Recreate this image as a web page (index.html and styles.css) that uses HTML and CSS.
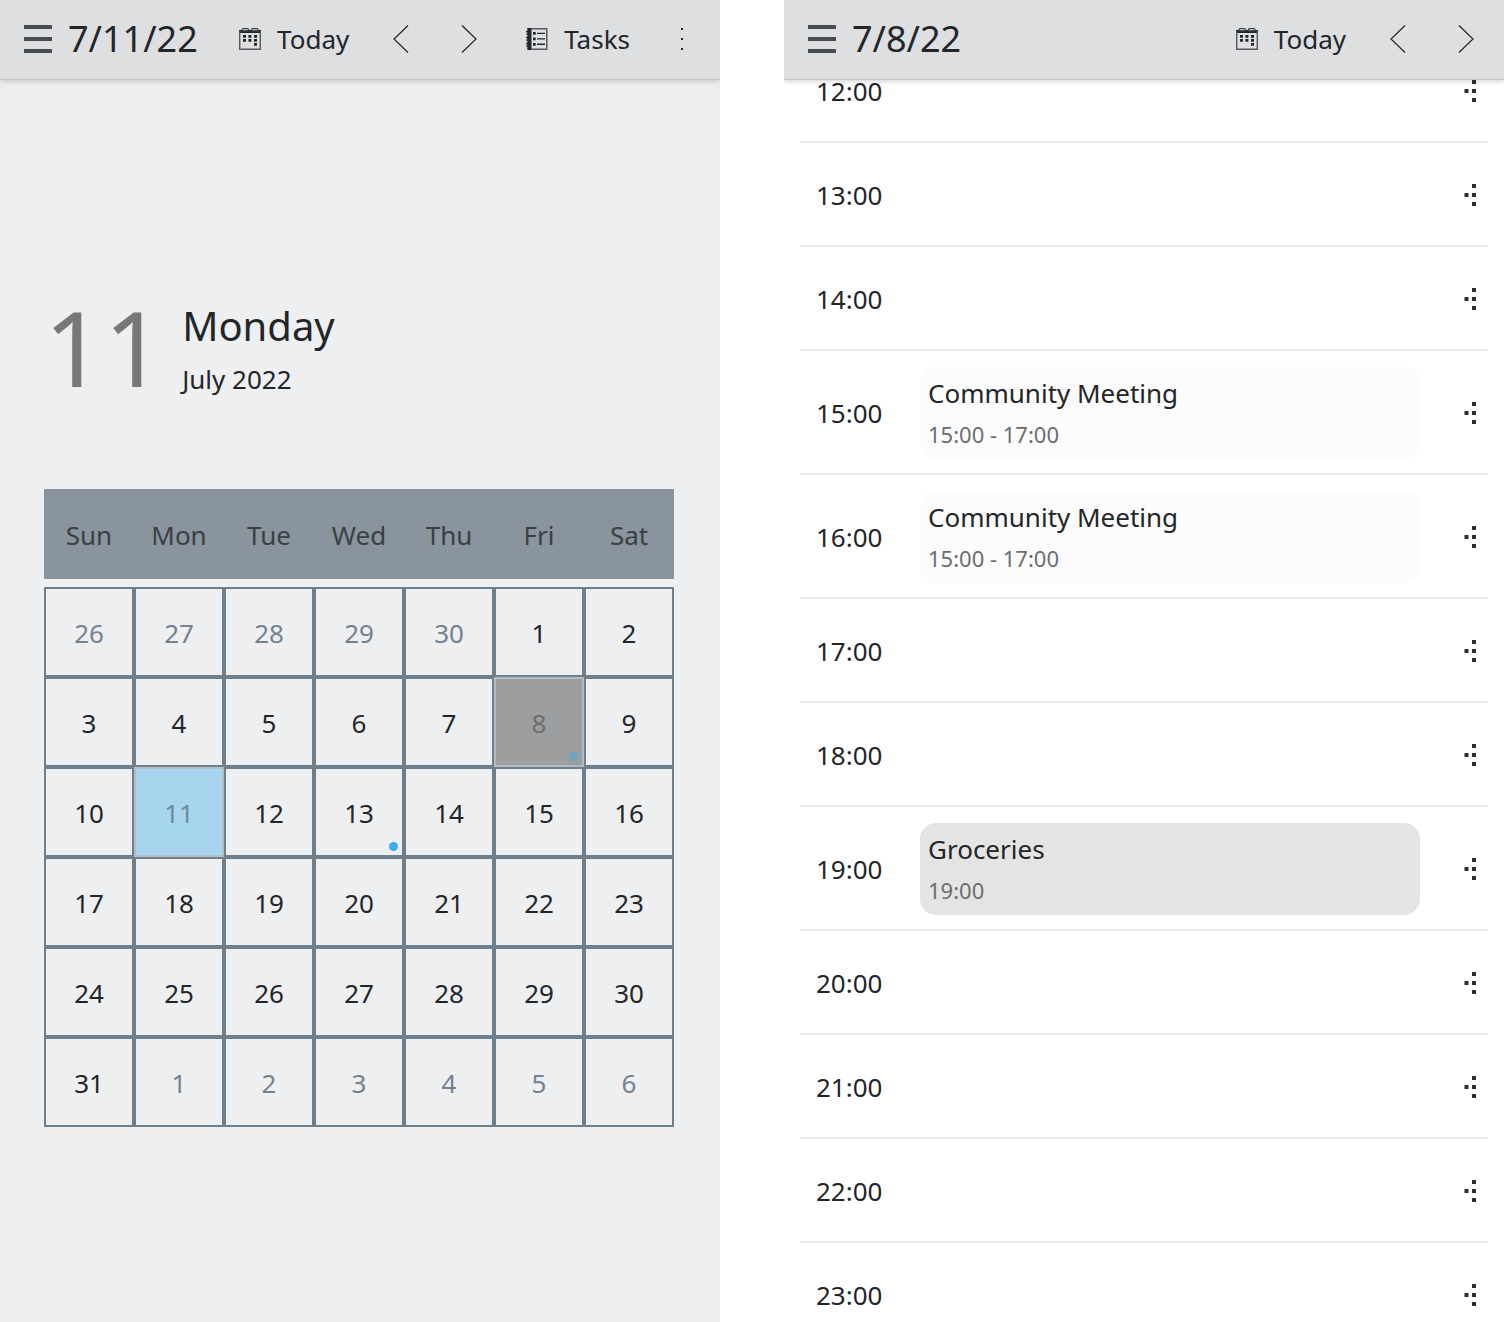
FILE: index.html
```
<!DOCTYPE html>
<html lang="en">
<head>
<meta charset="utf-8">
<meta name="viewport" content="width=device-width, initial-scale=1">
<title>Calendar</title>
<link rel="stylesheet" href="styles.css">
</head>
<body>
<svg class="sprite" aria-hidden="true">
  <symbol id="i-menu" viewBox="0 0 28 28"><path fill="#484b4f" d="M0 0h28v4H0zM0 12h28v4H0zM0 24h28v4H0z"/></symbol>
  <symbol id="i-calendar" viewBox="0 0 22 22">
    <path fill="#232629" d="M0 2h22v3H0z"/>
    <path fill="none" stroke="#56595c" stroke-width="1.4" d="M.7 3v18.3h20.6V3"/>
    <path fill="#dedfe1" stroke="#3c3f42" stroke-width="1.2" d="M3 2.800V1.800Q3 .6 4.200 .6H8.300Q9.500 .6 9.500 1.800V2.800zM12.500 2.800V1.800Q12.500 .6 13.700 .6H17.800Q19 .6 19 1.800V2.800z"/>
    <path fill="#232629" d="M4 7h3v2.700H4zM9.400 7h3v2.700h-3zM15 7h3v2.700h-3zM4 11h3v2.700H4zM9.400 11h3v2.700h-3zM15 11h3v2.700h-3zM15 15h3v2.700h-3z"/>
  </symbol>
  <symbol id="i-tasks" viewBox="0 0 22 22">
    <path fill="#232629" d="M1.300 0H5.500v22H1.300zM0 3h2v1.200H0zM0 5.400h2v1.200H0zM0 9h2v1.200H0zM0 11.400h2v1.200H0zM0 15h2v1.200H0zM0 17.400h2v1.200H0zM7 4h2.700v2.700H7zM7 9.600h2.700v2.700H7zM7 15h2.700v2.700H7zM11 4.700h8v1.300h-8zM11 10.200h8v1.300h-8zM11 15.600h8v1.300h-8z"/>
    <path fill="none" stroke="#56595c" stroke-width="1.500" d="M5 .75h15.750v20.500H5"/>
  </symbol>
  <symbol id="i-prev" viewBox="0 0 16 28"><path fill="none" stroke="#232629" stroke-width="1.200" d="M15 .5 1 14l14 13.500"/></symbol>
  <symbol id="i-next" viewBox="0 0 16 28"><path fill="none" stroke="#232629" stroke-width="1.200" d="M1 .5 15 14 1 27.500"/></symbol>
  <symbol id="i-more" viewBox="0 0 2 22"><path fill="#232629" d="M0 0h2v2H0zM0 10h2v2H0zM0 20h2v2H0z"/></symbol>
  <symbol id="i-actions" viewBox="0 0 12 22"><path fill="#2b2e31" d="M8 0h4v4H8zM8 9h4v4H8zM8 18h4v4H8zM.5 9h4v4h-4z"/></symbol>
</svg>

<main class="screens">
  <section class="screen screen-month" aria-label="Month">
    <header class="toolbar">
      <button class="menu" type="button" aria-label="Menu"><svg class="icon-menu"><use href="#i-menu"/></svg></button>
      <h1 class="title">7/11/22</h1>
      <button class="action" type="button"><svg class="icon"><use href="#i-calendar"/></svg>Today</button>
      <button class="step" type="button" aria-label="Previous"><svg class="icon-arrow"><use href="#i-prev"/></svg></button>
      <button class="step" type="button" aria-label="Next"><svg class="icon-arrow"><use href="#i-next"/></svg></button>
      <button class="action" type="button"><svg class="icon"><use href="#i-tasks"/></svg>Tasks</button>
      <button class="step" type="button" aria-label="More"><svg class="icon-more"><use href="#i-more"/></svg></button>
    </header>
    <div class="month">
      <div class="date">
        <span class="date-number">11</span>
        <div class="date-text">
          <h2 class="weekday">Monday</h2>
          <p class="month-name">July 2022</p>
        </div>
      </div>
      <table class="calendar">
        <thead>
          <tr><th scope="col">Sun</th><th scope="col">Mon</th><th scope="col">Tue</th><th scope="col">Wed</th><th scope="col">Thu</th><th scope="col">Fri</th><th scope="col">Sat</th></tr>
        </thead>
        <tbody>
          <tr><td><button class="day other" type="button">26</button></td><td><button class="day other" type="button">27</button></td><td><button class="day other" type="button">28</button></td><td><button class="day other" type="button">29</button></td><td><button class="day other" type="button">30</button></td><td><button class="day" type="button">1</button></td><td><button class="day" type="button">2</button></td></tr>
          <tr><td><button class="day" type="button">3</button></td><td><button class="day" type="button">4</button></td><td><button class="day" type="button">5</button></td><td><button class="day" type="button">6</button></td><td><button class="day" type="button">7</button></td><td><button class="day selected busy" type="button">8</button></td><td><button class="day" type="button">9</button></td></tr>
          <tr><td><button class="day" type="button">10</button></td><td><button class="day today" type="button">11</button></td><td><button class="day" type="button">12</button></td><td><button class="day busy" type="button">13</button></td><td><button class="day" type="button">14</button></td><td><button class="day" type="button">15</button></td><td><button class="day" type="button">16</button></td></tr>
          <tr><td><button class="day" type="button">17</button></td><td><button class="day" type="button">18</button></td><td><button class="day" type="button">19</button></td><td><button class="day" type="button">20</button></td><td><button class="day" type="button">21</button></td><td><button class="day" type="button">22</button></td><td><button class="day" type="button">23</button></td></tr>
          <tr><td><button class="day" type="button">24</button></td><td><button class="day" type="button">25</button></td><td><button class="day" type="button">26</button></td><td><button class="day" type="button">27</button></td><td><button class="day" type="button">28</button></td><td><button class="day" type="button">29</button></td><td><button class="day" type="button">30</button></td></tr>
          <tr><td><button class="day" type="button">31</button></td><td><button class="day other" type="button">1</button></td><td><button class="day other" type="button">2</button></td><td><button class="day other" type="button">3</button></td><td><button class="day other" type="button">4</button></td><td><button class="day other" type="button">5</button></td><td><button class="day other" type="button">6</button></td></tr>
        </tbody>
      </table>
    </div>
  </section>

  <section class="screen screen-day" aria-label="Day">
    <header class="toolbar">
      <button class="menu" type="button" aria-label="Menu"><svg class="icon-menu"><use href="#i-menu"/></svg></button>
      <h1 class="title">7/8/22</h1>
      <button class="action" type="button"><svg class="icon"><use href="#i-calendar"/></svg>Today</button>
      <button class="step" type="button" aria-label="Previous"><svg class="icon-arrow"><use href="#i-prev"/></svg></button>
      <button class="step" type="button" aria-label="Next"><svg class="icon-arrow"><use href="#i-next"/></svg></button>
    </header>
    <ol class="hours">
      <li class="hour"><time class="time">12:00</time><button class="actions" type="button" aria-label="Actions for 12:00"><svg class="icon-actions"><use href="#i-actions"/></svg></button></li>
      <li class="hour"><time class="time">13:00</time><button class="actions" type="button" aria-label="Actions for 13:00"><svg class="icon-actions"><use href="#i-actions"/></svg></button></li>
      <li class="hour"><time class="time">14:00</time><button class="actions" type="button" aria-label="Actions for 14:00"><svg class="icon-actions"><use href="#i-actions"/></svg></button></li>
      <li class="hour"><time class="time">15:00</time>
        <article class="event"><h2 class="event-name">Community Meeting</h2><p class="event-time">15:00 - 17:00</p></article>
        <button class="actions" type="button" aria-label="Actions for 15:00"><svg class="icon-actions"><use href="#i-actions"/></svg></button></li>
      <li class="hour"><time class="time">16:00</time>
        <article class="event"><h2 class="event-name">Community Meeting</h2><p class="event-time">15:00 - 17:00</p></article>
        <button class="actions" type="button" aria-label="Actions for 16:00"><svg class="icon-actions"><use href="#i-actions"/></svg></button></li>
      <li class="hour"><time class="time">17:00</time><button class="actions" type="button" aria-label="Actions for 17:00"><svg class="icon-actions"><use href="#i-actions"/></svg></button></li>
      <li class="hour"><time class="time">18:00</time><button class="actions" type="button" aria-label="Actions for 18:00"><svg class="icon-actions"><use href="#i-actions"/></svg></button></li>
      <li class="hour"><time class="time">19:00</time>
        <article class="event event-active"><h2 class="event-name">Groceries</h2><p class="event-time">19:00</p></article>
        <button class="actions" type="button" aria-label="Actions for 19:00"><svg class="icon-actions"><use href="#i-actions"/></svg></button></li>
      <li class="hour"><time class="time">20:00</time><button class="actions" type="button" aria-label="Actions for 20:00"><svg class="icon-actions"><use href="#i-actions"/></svg></button></li>
      <li class="hour"><time class="time">21:00</time><button class="actions" type="button" aria-label="Actions for 21:00"><svg class="icon-actions"><use href="#i-actions"/></svg></button></li>
      <li class="hour"><time class="time">22:00</time><button class="actions" type="button" aria-label="Actions for 22:00"><svg class="icon-actions"><use href="#i-actions"/></svg></button></li>
      <li class="hour"><time class="time">23:00</time><button class="actions" type="button" aria-label="Actions for 23:00"><svg class="icon-actions"><use href="#i-actions"/></svg></button></li>
    </ol>
  </section>
</main>
</body>
</html>
```
FILE: styles.css
```
* { box-sizing: border-box; margin: 0; padding: 0; }

body {
  background: #fff;
  color: #232629;
  font: 26px/36px "Noto Sans", sans-serif;
}

h1, h2, th { font-weight: 400; }
button { border: 0; background: none; color: inherit; font: inherit; cursor: pointer; }
svg { display: block; flex: none; }

.sprite { position: absolute; width: 0; height: 0; }

.screens {
  display: grid;
  grid-template-columns: 1fr 1fr;
  gap: 64px;
  height: 100vh;
}

.screen {
  display: flex;
  flex-direction: column;
  min-width: 0;
  overflow: hidden;
}

.screen-month { background: #eeeff1; }

/* Toolbar */
.toolbar {
  display: flex;
  flex: none;
  align-items: center;
  height: 80px;
  padding: 0 4px 1px 0;
  background: #dedfe1;
  border-bottom: 1px solid #c3c4c6;
  box-shadow: 0 1px 6px rgba(0, 0, 0, .2);
  z-index: 1;
}

.menu { padding: 0 16px 0 24px; }
.icon-menu { width: 28px; height: 28px; }
.title { flex: 1; font-size: 36px; line-height: 50px; }

.action {
  display: flex;
  align-items: center;
  gap: 16px;
  height: 68px;
  padding: 0 18px 0 23px;
}

.step {
  display: flex;
  align-items: center;
  justify-content: center;
  width: 68px;
  height: 68px;
}

.icon { width: 22px; height: 22px; }
.icon-arrow { width: 16px; height: 28px; }
.icon-more { width: 2px; height: 22px; }

/* Month */
.month {
  display: flex;
  flex: 1;
  flex-direction: column;
  justify-content: center;
  gap: 70px;
  padding: 0 46px 0 44px;
}

.date { display: flex; align-items: center; gap: 18px; }
.date-number { color: #77787a; font-size: 105px; line-height: 144px; }
.date-text { display: flex; flex-direction: column; gap: 6px; }
.weekday { font-size: 40px; line-height: 58px; }

.calendar { width: 100%; table-layout: fixed; border-spacing: 0; }
.calendar th { height: 90px; padding-top: 2px; background: #8a949e; color: #3a3f44; }
.calendar tbody::before { content: ""; display: block; height: 8px; }

.day {
  position: relative;
  display: block;
  width: 100%;
  height: 90px;
  padding-top: 2px;
  border: 2px solid #6f7e8b;
}

.other { color: #748290; }
.today { background: #a7d5ed; border-color: #b4bdc4; color: #6d8b9c; }
.selected { background: #9d9ea0; border-color: #b4bcc3; color: #6c6d6f; }

.busy::after {
  content: "";
  position: absolute;
  right: 4px;
  bottom: 4px;
  width: 9px;
  height: 9px;
  border-radius: 50%;
  background: #3daee9;
}

.selected::after { background: #6da3c1; }

/* Day: the list is scrolled part of a row under the toolbar */
.hours { margin: -41px 16px 0; list-style: none; }

.hour {
  display: flex;
  align-items: center;
  min-height: 104px;
  padding: 16px 0 14px 16px;
  border-bottom: 2px solid #ececed;
}

.time { width: 104px; }

.event {
  flex: 1;
  display: grid;
  gap: 8px;
  padding: 8px 8px 10px;
  border-radius: 16px;
  background: #fcfcfc;
}

.event-active { background: #e4e4e4; }
.event-name { font-size: 26px; line-height: 36px; }
.event-time { color: #6b6d6f; font-size: 22px; line-height: 30px; }

.actions {
  display: flex;
  justify-content: flex-end;
  width: 68px;
  margin-left: auto;
  padding: 16px 12px;
}

.icon-actions { width: 12px; height: 22px; }
```
